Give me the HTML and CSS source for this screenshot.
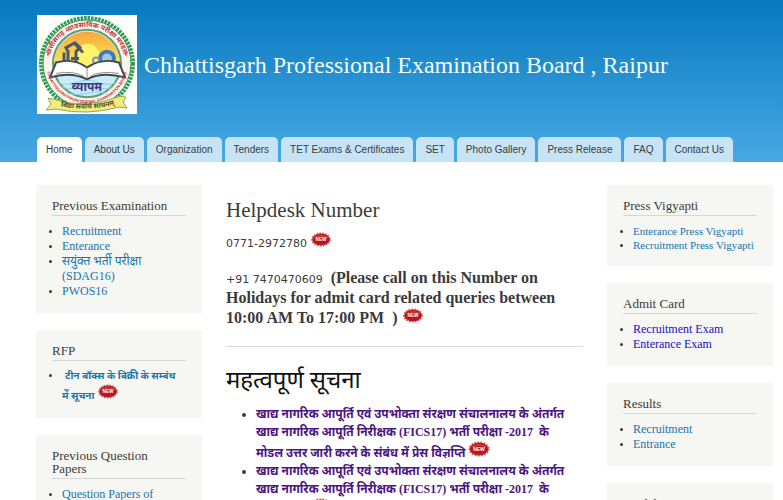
FILE: index.html
```html
<!DOCTYPE html>
<html lang="en">
<head>
<meta charset="utf-8">
<meta name="viewport" content="width=device-width, initial-scale=1">
<title>Chhattisgarh Professional Examination Board, Raipur</title>
<link rel="stylesheet" href="styles.css">
</head>
<body>
<svg class="defs" aria-hidden="true">
  <symbol id="new" viewBox="0 0 22 16">
    <ellipse cx="11" cy="8" rx="9.500" ry="6.500" fill="#b91d20" stroke="#c9484a" stroke-width="2" stroke-dasharray="1.500 1.500"/>
    <ellipse cx="11" cy="8" rx="8.500" ry="5.500" fill="#b5171b"/>
    <path d="M4 6q7-4 14 0" fill="none" stroke="#d85552"/>
    <text x="11" y="10" text-anchor="middle" font-family="Liberation Sans" font-size="5" font-weight="bold" fill="#fff">NEW</text>
  </symbol>
</svg>
<header class="header">
  <div class="brand">
    <svg class="logo" viewBox="0 0 100 100" preserveAspectRatio="none" role="img" aria-label="Board emblem">
      <defs>
        <path id="top-arc" d="M12 50A38 38 0 0 1 88 50"/>
        <path id="low-arc" d="M9 48A41 41 0 0 0 91 48"/>
        <path id="ribbon-arc" d="M17 91Q50 99 84 89"/>
        <linearGradient id="sky" x2="0" y2="1"><stop stop-color="#f9a63a"/><stop offset="1" stop-color="#fde95a"/></linearGradient>
      </defs>
      <path fill="#fffefa" d="M0 0h100v100H0z"/>
      <circle cx="50" cy="49" r="46" fill="#fff4ea" stroke="#2f9a58" stroke-width="4" stroke-dasharray="2.500 1"/>
      <circle cx="50" cy="49" r="44" fill="none" stroke="#2f9a58"/>
      <circle cx="50" cy="49" r="34" fill="#c9ebf8" stroke="#5c9d7a" stroke-width="2"/>
      <path d="M17 50a33 33 0 0 1 66 0z" fill="url(#sky)"/>
      <circle cx="51" cy="40" r="11" fill="#fff46a"/>
      <path d="M31 51V37l-2-4 9-5 5 5-4 4v12M38 29l8 9M27 38v12M34 44h8" fill="none" stroke="#4a5a6b" stroke-width="3"/>
      <circle cx="70" cy="44" r="7" fill="#a6c5e3" stroke="#3f7ab8" stroke-width="4"/>
      <circle cx="59" cy="46" r="3" fill="none" stroke="#8c8fb4" stroke-width="2"/>
      <path d="M19 48Q36 43 50 53Q65 43 82 48L88 63Q65 57 50 65Q34 57 13 63z" fill="#fff" stroke="#394b52" stroke-width="2"/>
      <path d="M50 53v11M19 59q18-3 28 3M82 59q-19-3-29 3" fill="none" stroke="#a08b78"/>
      <path d="M20 68q10 4 20 0t20 0 20 0M24 73q9 3 17 0t18 0 17 0M30 79q10 3 20 0t20 0" fill="none" stroke="#8fcfe2"/>
      <text class="emblem-name" x="50" y="77">व्यापम</text>
      <text class="emblem-hindi"><textPath href="#top-arc" startOffset="50%">छत्तीसगढ़ व्यावसायिक परीक्षा मण्डल</textPath></text>
      <text class="emblem-english"><textPath href="#low-arc" startOffset="50%">CHHATTISGARH PROFESSIONAL EXAMINATION BOARD</textPath></text>
      <circle cx="11" cy="40" r="1" fill="#c52d2e"/><circle cx="89" cy="40" r="1" fill="#c52d2e"/>
      <path d="M11 84l6 1q33 11 66-3l6 1-3 5 4 6-8-1q-32 9-63 2l-10 1 5-6z" fill="#f1eb80" stroke="#98a648"/>
      <text class="emblem-motto"><textPath href="#ribbon-arc" startOffset="50%">विद्या सर्वार्थ साधनम्</textPath></text>
    </svg>
    <h1 class="site-name">Chhattisgarh Professional Examination Board , Raipur</h1>
  </div>
  <nav class="tabs" aria-label="Main">
    <a class="tab active" href="#" aria-current="page">Home</a>
    <a class="tab" href="#">About Us</a>
    <a class="tab" href="#">Organization</a>
    <a class="tab" href="#">Tenders</a>
    <a class="tab" href="#">TET Exams &amp; Certificates</a>
    <a class="tab" href="#">SET</a>
    <a class="tab" href="#">Photo Gallery</a>
    <a class="tab" href="#">Press Release</a>
    <a class="tab" href="#">FAQ</a>
    <a class="tab" href="#">Contact Us</a>
  </nav>
</header>
<div class="columns">
  <aside class="sidebar">
    <section class="block">
      <h2>Previous Examination</h2>
      <ul>
        <li><a href="#">Recruitment</a></li>
        <li><a href="#">Enterance</a></li>
        <li><a href="#">सयुंक्त भर्ती परीक्षा (SDAG16)</a></li>
        <li><a href="#">PWOS16</a></li>
      </ul>
    </section>
    <section class="block rfp">
      <h2>RFP</h2>
      <ul>
        <li>&nbsp;<a href="#">टीन बॉक्स के बिक्री के सम्बंध में सूचना</a> <svg class="new" role="img" aria-label="New"><use href="#new"/></svg></li>
      </ul>
    </section>
    <section class="block">
      <h2>Previous Question Papers</h2>
      <ul>
        <li><a href="#">Question Papers of Recruitment Exam</a></li>
      </ul>
    </section>
  </aside>
  <main class="content">
    <h2 class="helpdesk">Helpdesk Number</h2>
    <p class="phone"><span class="number">0771-2972780</span> <svg class="new" role="img" aria-label="New"><use href="#new"/></svg></p>
    <p class="notice"><span class="number">+91 7470470609</span> &nbsp;<strong>(Please call on this Number on Holidays for admit card related queries between 10:00 AM To 17:00 PM &nbsp;)</strong> <svg class="new" role="img" aria-label="New"><use href="#new"/></svg></p>
    <hr>
    <h2 class="important">महत्वपूर्ण सूचना</h2>
    <ul class="news">
      <li><a href="#">खाद्य नागरिक आपूर्ति एवं उपभोक्ता संरक्षण संचालनालय के अंतर्गत खाद्य नागरिक आपूर्ति निरीक्षक (FICS17) भर्ती परीक्षा -2017 &nbsp;के मोडल उत्तर जारी करने के संबंध में प्रेस विज्ञप्ति</a> <svg class="new" role="img" aria-label="New"><use href="#new"/></svg></li>
      <li><a href="#">खाद्य नागरिक आपूर्ति एवं उपभोक्ता संरक्षण संचालनालय के अंतर्गत खाद्य नागरिक आपूर्ति निरीक्षक (FICS17) भर्ती परीक्षा -2017 &nbsp;के मोडल उत्तर</a> <svg class="new" role="img" aria-label="New"><use href="#new"/></svg></li>
    </ul>
  </main>
  <aside class="sidebar">
    <section class="block press">
      <h2>Press Vigyapti</h2>
      <ul>
        <li><a href="#">Enterance Press Vigyapti</a></li>
        <li><a href="#">Recruitment Press Vigyapti</a></li>
      </ul>
    </section>
    <section class="block admit">
      <h2>Admit Card</h2>
      <ul>
        <li><a href="#">Recruitment Exam</a></li>
        <li><a href="#">Enterance Exam</a></li>
      </ul>
    </section>
    <section class="block">
      <h2>Results</h2>
      <ul>
        <li><a href="#">Recruitment</a></li>
        <li><a href="#">Entrance</a></li>
      </ul>
    </section>
    <section class="block">
      <h2>Model Answer</h2>
      <ul>
        <li><a href="#">Recruitment</a></li>
      </ul>
    </section>
  </aside>
</div>
</body>
</html>
```
FILE: styles.css
```css
* { box-sizing: border-box; }
body {
  margin: 0;
  background: #fff;
  color: #3b3b3b;
  font-family: Georgia, "Liberation Serif", "Noto Sans", serif;
  font-size: 12px;
}
a { color: #1875ad; text-decoration: none; }
h1, h2, p, ul { margin: 0; font-weight: normal; }
.defs { display: none; }

.header {
  padding: 15px 10px 0 37px;
  background: linear-gradient(#0779bf, #48a9e4);
}
.brand { display: flex; align-items: center; gap: 7px; }
.logo { width: 100px; height: 99px; flex: none; }
.emblem-name { font: bold 12px "Noto Sans", sans-serif; fill: #413783; text-anchor: middle; }
.emblem-hindi { font: bold 7px "Noto Sans", sans-serif; fill: #bd3948; text-anchor: middle; }
.emblem-english { font: bold 4px "Liberation Sans", sans-serif; fill: #b52e45; text-anchor: middle; }
.emblem-motto { font: bold 7px "Noto Sans", sans-serif; fill: #574b20; text-anchor: middle; }
.site-name {
  color: #f4fcff;
  font: 24px/30px "Liberation Serif", serif;
}
.tabs { display: flex; gap: 3px; margin-top: 23px; }
.tab {
  padding: 0 9px;
  border-radius: 5px 5px 0 0;
  background: #c6e4f6;
  color: #3b3b3b;
  font: 10px/25px "Liberation Sans", sans-serif;
  white-space: nowrap;
}
.tab.active { background: #fff; }

.columns {
  display: grid;
  grid-template-columns: 166fr 357fr 166fr;
  gap: 24px;
  padding: 23px 10px 0 36px;
}
.sidebar { display: flex; flex-direction: column; gap: 17px; min-width: 0; }
.block { padding: 14px 16px; background: #f6f6f2; }
.block h2 {
  padding: 0 4px 3px 0;
  border-bottom: 1px solid #d6d6d6;
  font-size: 13px;
  line-height: 13px;
}
.block ul { margin-top: 8px; padding-left: 10px; line-height: 15px; }
.block li::marker { font-size: 10px; }
.rfp a { font-size: 10px; font-weight: bold; }
.block.rfp ul { margin-top: 6px; padding-right: 4px; line-height: 16px; }
.block.press ul { font-size: 11px; line-height: 14px; }
.admit a { color: #1a0dcb; }
.new { width: 22px; height: 15px; }

.content { padding-top: 12px; min-width: 0; }
.helpdesk { font-size: 21px; line-height: 26px; }
.phone { margin-top: 9px; line-height: 20px; }
.number { font: 11px "DejaVu Sans", sans-serif; }
.notice { margin-top: 15px; font-size: 16px; line-height: 20px; }
hr { margin: 18px 0 16px; border: 0; border-top: 1px solid #ddd; }
.important { color: #111; font-size: 24px; line-height: 34px; }
.news { margin-top: 8px; padding: 0 8px 0 30px; line-height: 18px; font-weight: bold; }
.news .new { height: 16px; }
.news a { color: #4b1683; }
```
